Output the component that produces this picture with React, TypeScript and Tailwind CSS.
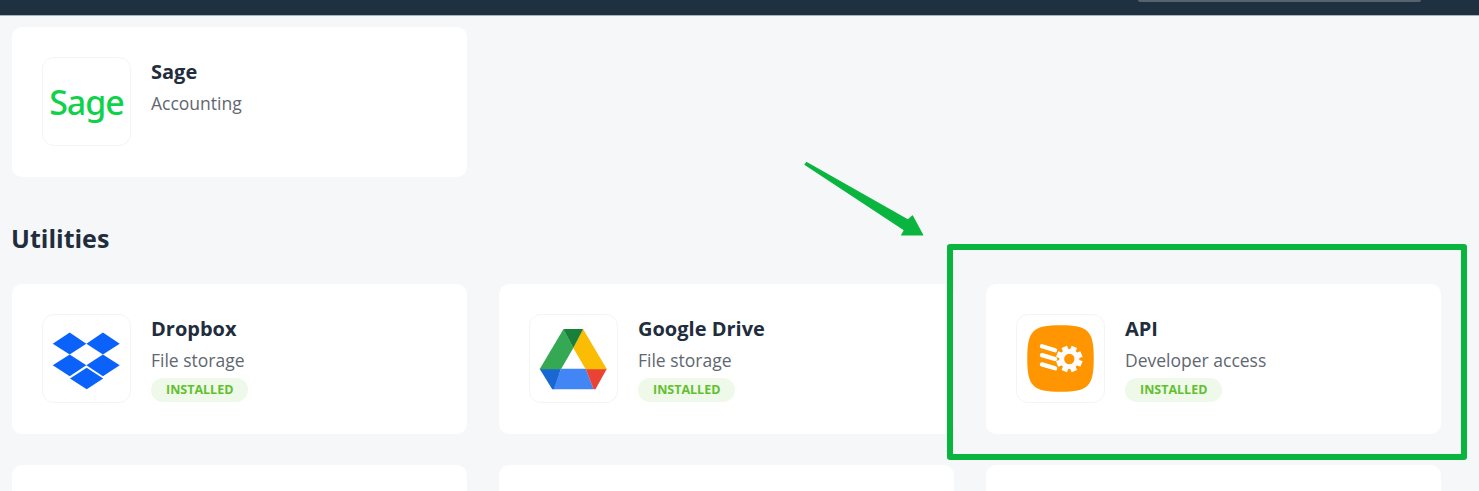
const font = { fontFamily: '"Open Sans", sans-serif' };

function SageLogo() {
  return (
    <span className="text-[34px] leading-none tracking-[-1px] text-[#0fd24b] font-medium [font-family:'Noto_Sans',sans-serif]">
      Sage
    </span>
  );
}

function DropboxLogo() {
  return (
    <svg viewBox="0 0 89 89" className="w-full h-full">
      <g fill="#0b62fb">
        <polygon points="10,29.3 27.3,18 44.3,29.3 27.3,40.3" />
        <polygon points="44.4,29.3 61.3,18 78.5,29.3 61.3,40.3" />
        <polygon points="10,51.5 27.3,40.3 44.3,51.5 27.3,62.7" />
        <polygon points="44.4,51.5 61.3,40.3 78.5,51.5 61.3,62.7" />
        <polygon points="27.6,65 44.7,54 61.6,65 44.7,76" />
      </g>
    </svg>
  );
}

function DriveLogo() {
  return (
    <svg viewBox="0 0 89 89" className="w-full h-full">
      <polygon points="9.8,55 31.7,55 25,76 22.7,76" fill="#1967d2" />
      <polygon points="31.7,55 57,55 65,76 24,76" fill="#4285f4" />
      <polygon points="57,55 78.6,55 67,76 65,76" fill="#ea4335" />
      <polygon points="34.3,14.3 44.3,33.7 31.7,55.5 9.8,55.5" fill="#34a853" />
      <polygon points="54.3,14.3 78.6,55.5 57,55.5 44.3,33.7" fill="#fbbc04" />
      <polygon points="36,14.3 53,14.3 54.3,14.5 44.3,33.7 34.3,14.5" fill="#188038" />
    </svg>
  );
}

function ApiLogo() {
  const teeth = [0, 45, 90, 135, 180, 225, 270, 315];
  return (
    <svg viewBox="0 0 89 89" className="w-full h-full">
      <path
        d="M10.5 44.5 C10.5 16 16 10.5 44.5 10.5 C73 10.5 78.5 16 78.5 44.5 C78.5 73 73 78.5 44.5 78.5 C16 78.5 10.5 73 10.5 44.5 Z"
        fill="#ff9500"
      />
      <g stroke="#fff" strokeWidth="4.4" strokeLinecap="round">
        <line x1="25.5" y1="32" x2="39" y2="36" />
        <line x1="25.5" y1="41" x2="39" y2="45" />
        <line x1="25.5" y1="50.5" x2="39" y2="54.5" />
      </g>
      <g transform="translate(53.5 45)">
        {teeth.map((a) => (
          <rect key={a} x="-3" y="-13.5" width="6" height="7" fill="#fff" transform={`rotate(${a + 22.5})`} />
        ))}
        <circle r="7.8" fill="none" stroke="#fff" strokeWidth="5" />
      </g>
    </svg>
  );
}

function AppCard({
  name,
  kind,
  installed,
  logo,
}: {
  name: string;
  kind: string;
  installed?: boolean;
  logo?: React.ReactNode;
}) {
  return (
    <div className="h-[149.5px] bg-white rounded-[10px] p-[30px] flex gap-5">
      <div className="w-[89px] h-[89px] shrink-0 border border-[#f3f4f6] rounded-xl flex items-center justify-center overflow-hidden">
        {logo}
      </div>
      <div className="flex flex-col items-start">
        <div className="text-xl leading-[30px] font-bold text-[#1f2d3d]">{name}</div>
        <div className="text-[17.5px] leading-[32px] text-[#5f6770]">{kind}</div>
        {installed && (
          <div className="h-6 mt-[2px] px-[15px] rounded-full bg-[#eef9e9] text-[12.5px] font-bold leading-6 text-[#62c02f] uppercase">
            Installed
          </div>
        )}
      </div>
    </div>
  );
}

export default function App() {
  return (
    <div style={font} className="relative h-[491px] overflow-hidden bg-[#f6f7f9]">
      <div className="h-[16px] bg-[#1f3040] border-b border-[#aab2ba] flex justify-end pr-[58px]">
        <div className="w-[283px] h-[2px] rounded-b-md bg-[#55636f]" />
      </div>

      <div className="pl-3 pt-[11px] w-[1441px]">
        <div className="grid grid-cols-3 gap-x-8">
          <AppCard name="Sage" kind="Accounting" logo={<SageLogo />} />
        </div>

        <h2 className="text-[25px] font-bold leading-8 text-[#1f2d3d] mt-[45.5px] mb-[30px] -ml-[1px]">Utilities</h2>

        <div className="grid grid-cols-3 gap-x-8 gap-y-[31.5px]">
          <AppCard name="Dropbox" kind="File storage" installed logo={<DropboxLogo />} />
          <AppCard name="Google Drive" kind="File storage" installed logo={<DriveLogo />} />
          <AppCard name="API" kind="Developer access" installed logo={<ApiLogo />} />
          <AppCard name="" kind="" />
          <AppCard name="" kind="" />
          <AppCard name="" kind="" />
        </div>
      </div>

      {/* annotation over the screenshot */}
      <div className="absolute left-[947px] top-[244px] w-[520px] h-[216px] border-[6px] border-[#0ab53f] rounded-[3px]" />
      <svg className="absolute left-[800px] top-[158px] w-[130px] h-[82px]" viewBox="0 0 130 82">
        <path
          d="M5 6.5 L6.5 4.5 L108 62 L112.5 58 L122.7 77 L101.7 77 L104.5 72 Z"
          fill="#0ab53f"
          stroke="#0ab53f"
          strokeWidth="1.2"
          strokeLinejoin="round"
        />
      </svg>
    </div>
  );
}
